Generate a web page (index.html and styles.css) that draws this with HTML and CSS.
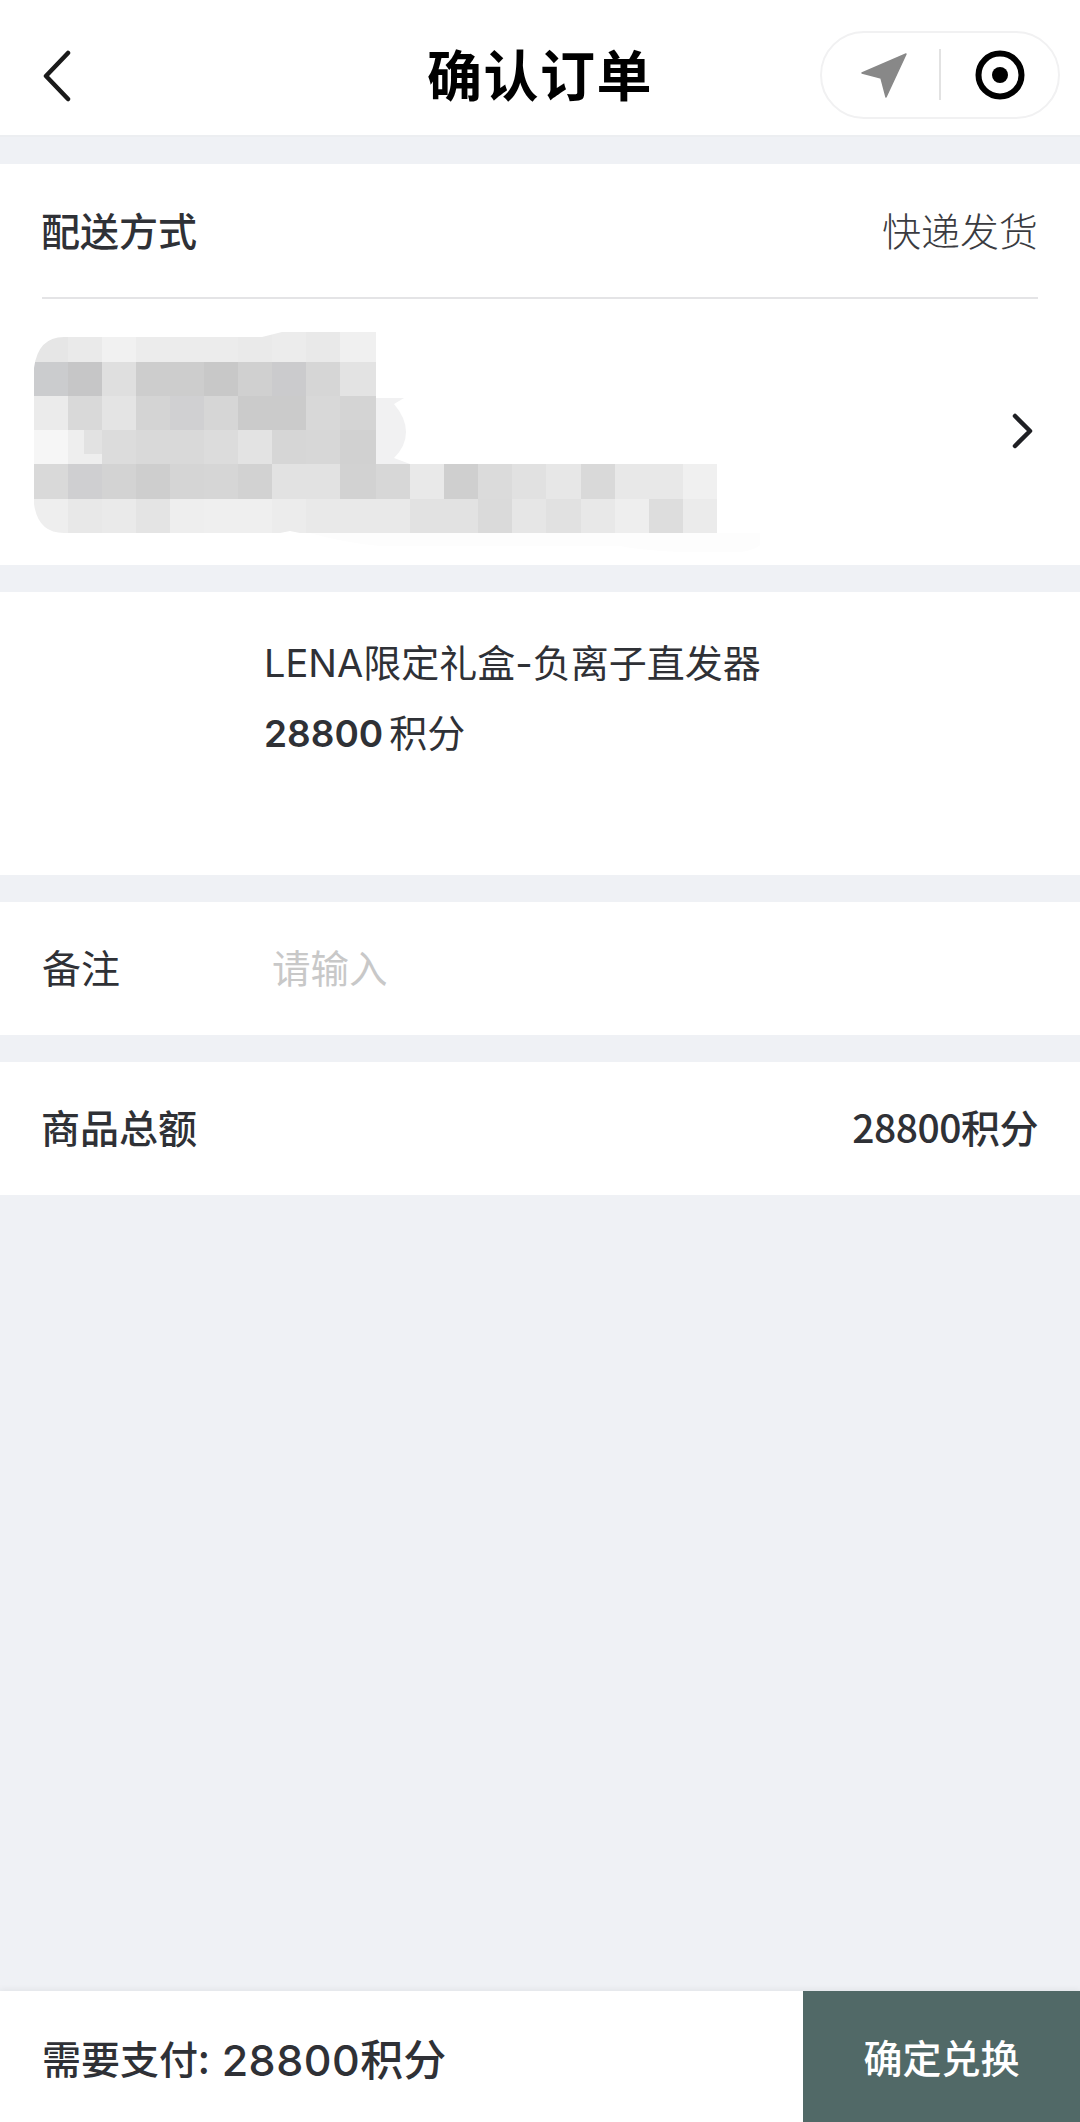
FILE: index.html
```html
<!DOCTYPE html>
<html lang="zh-CN">
<head>
<meta charset="utf-8">
<title>确认订单</title>
<link rel="stylesheet" href="styles.css">
</head>
<body>
<div class="page">
  <header class="nav">
    <svg class="back" width="34" height="52" viewBox="0 0 34 52"><path d="M28 3 6 26l22 23" fill="none" stroke="#1a1a1a" stroke-width="4.5" stroke-linecap="round" stroke-linejoin="round"/></svg>
    <h1 class="nav-title">确认订单</h1>
    <div class="capsule">
      <svg width="48" height="48" viewBox="0 0 48 48"><path d="M1 22 45 3 25 46l-5-19z" fill="#888" stroke="#888" stroke-width="1.5" stroke-linejoin="round"/></svg>
      <span class="capsule-line"></span>
      <svg width="50" height="50" viewBox="0 0 50 50"><circle cx="25" cy="25" r="21.5" fill="none" stroke="#000" stroke-width="6"/><circle cx="25" cy="25" r="8" fill="#000"/></svg>
    </div>
  </header>

  <main class="main">
    <section class="card">
      <div class="row row-delivery">
        <span class="label">配送方式</span>
        <span class="value-light">快递发货</span>
      </div>
      <div class="address">
        <svg class="mosaic" width="760" height="220" viewBox="0 0 760 220">
          <defs>
            <clipPath id="mc"><path d="M34 36Q38 5 64 5H262L282 0H376V132H717V201H300L290 199 280 201H64Q38 201 34 172Z"/></clipPath>
          </defs>
          <path d="M376 66H404L394 72Q406 86 406 100T394 126L410 132H376Z" fill="#f1f1f2"/>
          <path d="M310 201H770Q762 218 740 220H680Q640 218 620 214H380Q340 210 310 201Z" fill="#fdfdfd"/>
          <g clip-path="url(#mc)">
            <rect x="34" y="0" width="34" height="30" fill="#e6e6e6"/><rect x="68" y="0" width="34" height="30" fill="#eaeaea"/><rect x="102" y="0" width="34" height="30" fill="#f1f1f1"/><rect x="136" y="0" width="34" height="30" fill="#ececec"/><rect x="170" y="0" width="34" height="30" fill="#ececec"/><rect x="204" y="0" width="34" height="30" fill="#ececec"/><rect x="238" y="0" width="34" height="30" fill="#eaeaea"/><rect x="272" y="0" width="34" height="30" fill="#ececec"/><rect x="306" y="0" width="34" height="30" fill="#e9e9e9"/><rect x="340" y="0" width="36" height="30" fill="#f0f0f0"/>
            <rect x="34" y="30" width="34" height="34" fill="#cbccce"/><rect x="68" y="30" width="34" height="34" fill="#c6c6c7"/><rect x="102" y="30" width="34" height="34" fill="#dfdfdf"/><rect x="136" y="30" width="34" height="34" fill="#cdcdcd"/><rect x="170" y="30" width="34" height="34" fill="#cdcdcd"/><rect x="204" y="30" width="34" height="34" fill="#c8c8c8"/><rect x="238" y="30" width="34" height="34" fill="#d0d0d0"/><rect x="272" y="30" width="34" height="34" fill="#cbcbcd"/><rect x="306" y="30" width="34" height="34" fill="#d6d6d6"/><rect x="340" y="30" width="36" height="34" fill="#e3e3e3"/>
            <rect x="34" y="64" width="34" height="34" fill="#ebebeb"/><rect x="68" y="64" width="34" height="34" fill="#d9d9d9"/><rect x="102" y="64" width="34" height="34" fill="#e4e4e4"/><rect x="136" y="64" width="34" height="34" fill="#d4d4d4"/><rect x="170" y="64" width="34" height="34" fill="#d0d0d2"/><rect x="204" y="64" width="34" height="34" fill="#d6d6d6"/><rect x="238" y="64" width="68" height="34" fill="#cbcbcb"/><rect x="306" y="64" width="34" height="34" fill="#d8d8d8"/><rect x="340" y="64" width="36" height="34" fill="#d4d4d4"/>
            <rect x="34" y="98" width="34" height="34" fill="#f6f6f6"/><rect x="68" y="98" width="34" height="34" fill="#eeeeee"/><rect x="84" y="98" width="18" height="24" fill="#e2e2e2"/><rect x="102" y="98" width="34" height="34" fill="#dcdcdc"/><rect x="136" y="98" width="34" height="34" fill="#d9d9d9"/><rect x="170" y="98" width="34" height="34" fill="#d9d9d9"/><rect x="204" y="98" width="34" height="34" fill="#dcdcdc"/><rect x="238" y="98" width="34" height="34" fill="#e3e3e3"/><rect x="272" y="98" width="34" height="34" fill="#d6d6d6"/><rect x="306" y="98" width="34" height="34" fill="#d7d7d7"/><rect x="340" y="98" width="36" height="34" fill="#d1d1d1"/>
            <rect x="34" y="132" width="34" height="35" fill="#d9d9d9"/><rect x="68" y="132" width="34" height="35" fill="#cfcfd1"/><rect x="102" y="132" width="34" height="35" fill="#d3d3d3"/><rect x="136" y="132" width="34" height="35" fill="#cecece"/><rect x="170" y="132" width="34" height="35" fill="#d5d5d5"/><rect x="204" y="132" width="34" height="35" fill="#d6d6d6"/><rect x="238" y="132" width="34" height="35" fill="#d2d2d2"/><rect x="272" y="132" width="68" height="35" fill="#e2e2e2"/><rect x="340" y="132" width="36" height="35" fill="#d2d2d2"/><rect x="376" y="132" width="34" height="35" fill="#d7d7d7"/><rect x="410" y="132" width="34" height="35" fill="#e9e9e9"/><rect x="444" y="132" width="34" height="35" fill="#cfcfcf"/><rect x="478" y="132" width="34" height="35" fill="#dbdbdb"/><rect x="512" y="132" width="34" height="35" fill="#e1e1e1"/><rect x="546" y="132" width="35" height="35" fill="#e7e7e7"/><rect x="581" y="132" width="34" height="35" fill="#d9d9d9"/><rect x="615" y="132" width="34" height="35" fill="#e8e8e8"/><rect x="649" y="132" width="34" height="35" fill="#e8e8e8"/><rect x="683" y="132" width="34" height="35" fill="#f0f0f0"/>
            <rect x="34" y="167" width="34" height="34" fill="#eeeeee"/><rect x="68" y="167" width="34" height="34" fill="#e8e8e8"/><rect x="102" y="167" width="34" height="34" fill="#eaeaea"/><rect x="136" y="167" width="34" height="34" fill="#e4e4e4"/><rect x="170" y="167" width="34" height="34" fill="#eeeeee"/><rect x="204" y="167" width="34" height="34" fill="#efefef"/><rect x="238" y="167" width="34" height="34" fill="#efefef"/><rect x="272" y="167" width="34" height="34" fill="#ececec"/><rect x="306" y="167" width="34" height="34" fill="#e9e9e9"/><rect x="340" y="167" width="70" height="34" fill="#e9e9e9"/><rect x="410" y="167" width="34" height="34" fill="#e2e2e2"/><rect x="444" y="167" width="34" height="34" fill="#e2e2e2"/><rect x="478" y="167" width="34" height="34" fill="#dadada"/><rect x="512" y="167" width="34" height="34" fill="#e6e6e6"/><rect x="546" y="167" width="35" height="34" fill="#e1e1e1"/><rect x="581" y="167" width="34" height="34" fill="#e8e8e8"/><rect x="615" y="167" width="34" height="34" fill="#eeeeee"/><rect x="649" y="167" width="34" height="34" fill="#dddddd"/><rect x="683" y="167" width="34" height="34" fill="#ebebeb"/>
          </g>
        </svg>
        <svg class="arrow" width="22" height="36" viewBox="0 0 22 36"><path d="M3 3l15 15L3 33" fill="none" stroke="#1f2024" stroke-width="4.5" stroke-linecap="round" stroke-linejoin="round"/></svg>
      </div>
    </section>

    <section class="card product">
      <p class="product-name">LENA限定礼盒-负离子直发器</p>
      <p class="product-price"><b class="price-num">28800</b>积分</p>
    </section>

    <section class="card row row-note">
      <span class="label-regular">备注</span>
      <span class="placeholder">请输入</span>
    </section>

    <section class="card row row-total">
      <span class="label">商品总额</span>
      <span class="total-value">28800积分</span>
    </section>
  </main>

  <footer class="bar">
    <div class="pay">需要支付:<span class="pay-num"><span class="pay-digits">28800</span>积分</span></div>
    <div class="confirm">确定兑换</div>
  </footer>
</div>
</body>
</html>
```
FILE: styles.css
```css
* { box-sizing: border-box; }
html, body { margin: 0; padding: 0; }
body {
  font-family: "Noto Sans CJK SC", "Noto Sans", sans-serif;
  color: #2f3136;
  background: #eff1f5;
}
.page { width: 1080px; height: 2122px; display: flex; flex-direction: column; }
.nav {
  height: 137px;
  flex: none;
  background: #fff;
  border-bottom: 2px solid #eceef1;
  display: grid;
  grid-template-columns: 1fr auto 1fr;
  align-items: center;
  padding: 0 20px;
}
.back { display: block; margin: 16px 0 0 20px; }
.nav-title {
  margin: 8px 0 0;
  font-size: 55px;
  line-height: 70px;
  font-weight: 700;
  color: #000;
  letter-spacing: 1.5px;
}
.capsule {
  justify-self: end;
  width: 240px;
  height: 88px;
  margin-top: 14px;
  border: 2px solid #f1f1f2;
  border-radius: 44px;
  display: flex;
  align-items: center;
  padding-left: 39px;
}
.capsule-line { width: 2px; height: 51px; background: #e2e2e2; margin: 0 34px 0 30px; }
.main { flex: 1; display: flex; flex-direction: column; gap: 27px; padding-top: 27px; }
.card { background: #fff; }
.row { display: flex; align-items: center; justify-content: space-between; }
.row-delivery {
  height: 135px;
  margin: 0 42px;
  padding-bottom: 4px;
  border-bottom: 2px solid #e4e4e6;
}
.label, .label-regular, .value-light, .placeholder, .total-value { font-size: 39px; line-height: 50px; }
.label { font-weight: 500; margin-left: -1px; }
.value-light { font-weight: 300; color: #3a3b40; }
.address { height: 266px; display: flex; align-items: center; justify-content: space-between; padding-right: 46px; }
.mosaic { display: block; align-self: flex-start; margin-top: 33px; }
.arrow { display: block; margin-top: -2px; }
.product { height: 283px; padding: 43px 0 0 264px; font-family: Inter, "Noto Sans CJK SC", sans-serif; }
.product-name { margin: 0; font-size: 38px; line-height: 56px; font-weight: 400; }
.product-price { margin: 14px 0 0; font-size: 38px; line-height: 56px; }
.price-num { font-weight: 600; margin-right: 6px; font-size: 37px; }
.row-note { height: 133px; justify-content: flex-start; padding: 0 0 6px 42px; }
.label-regular { width: 230px; font-weight: 400; }
.placeholder { color: #c8c8c8; font-size: 38.5px; }
.row-total { height: 133px; padding: 0 42px 6px; }
.total-value { font-weight: 500; letter-spacing: -0.5px; }
.bar {
  height: 131px;
  flex: none;
  background: #fff;
  display: flex;
  align-items: stretch;
  justify-content: space-between;
  box-shadow: 0 -2px 6px rgba(0, 0, 0, .05);
}
.pay { display: flex; align-items: center; gap: 12px; padding-left: 42px; font-size: 39px; font-weight: 500; }
.pay-num { font-size: 43px; font-family: Inter, "Noto Sans CJK SC", sans-serif; font-weight: 500; }
.pay-digits { letter-spacing: 0.5px; }
.confirm {
  width: 277px;
  background: #516967;
  color: #fff;
  font-size: 39px;
  font-weight: 500;
  display: flex;
  align-items: center;
  justify-content: center;
  padding-bottom: 2px;
}
```
